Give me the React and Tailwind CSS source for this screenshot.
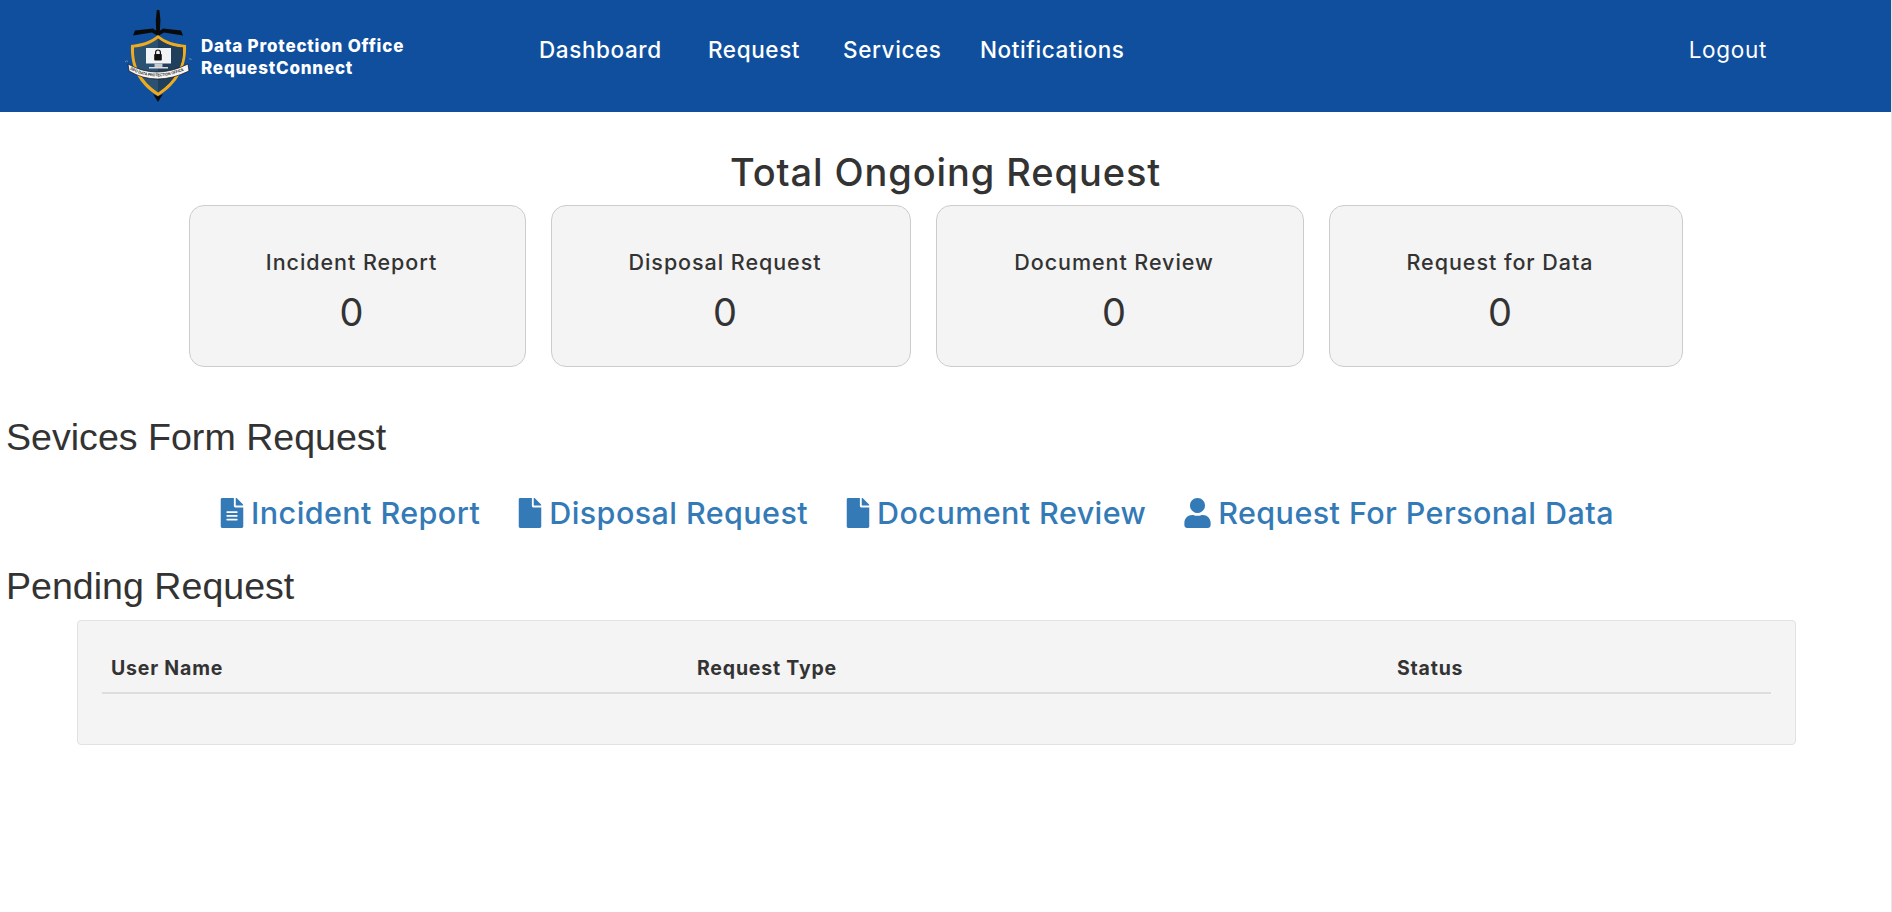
import { FaFileAlt, FaFile, FaUser } from 'react-icons/fa';

const Logo = () => (
  <svg viewBox="0 0 80 104" className="w-[80px] h-[104px] shrink-0">
    {/* sword */}
    <path d="M36.8 6h2.6l1 10 -0.6 13h-3.6l-0.4-13z" fill="#0a0a0a" />
    <path d="M13 31.5 L15 26.5 L33 24.5 L38 28 L43 24.5 L61 26.5 L63 31.5 L44 28.5 L38 32 L32 28.5z" fill="#0a0a0a" />
    {/* shield */}
    <path d="M38 31 C45 37 55 40 66 41 C67 62 58 80 38 92 C18 80 10 62 11 41 C21 40 31 37 38 31z" fill="#efab1d" />
    <path d="M38 34.5 C45 40 54 43 63 43.5 C64 62 55 77 38 88.5 C21 77 13 62 14 43.5 C22 43 31 40 38 34.5z" fill="#2b5273" />
    <path d="M38 34.5 C45 40 54 43 63 43.5 C64 62 55 77 38 88.5z" fill="#1f3f5c" />
    <path d="M33 90 L38 92.5 L43 90 L38 98z" fill="#0a0a0a" />
    {/* monitor + lock */}
    <rect x="26" y="44" width="25" height="15.5" fill="#f1f3f4" />
    <rect x="34.5" y="59.5" width="8" height="3.5" fill="#c4cacf" />
    <rect x="29" y="63" width="19" height="1.5" fill="#d9dde0" />
    <path d="M35.6 50v-1.6a2.4 2.4 0 0 1 4.8 0V50" fill="none" stroke="#111" strokeWidth="1.2" />
    <rect x="34.2" y="50" width="7.6" height="6.5" rx="0.8" fill="#111" />
    {/* banner */}
    <path d="M5 58 q1.5 -2 3 -0.5 M69 55 q2 -1 2.5 1" fill="none" stroke="#6f8aa3" strokeWidth="1" />
    <path d="M8 60 Q36 76 68 60 L69 67 Q36 83 9 67z" fill="#f6f6f6" stroke="#111" strokeWidth="0.7" />
    <path id="logo-banner-text" d="M10 65.5 Q36 79.5 67 65" fill="none" />
    <text fontFamily="Liberation Sans, sans-serif" fontSize="4" fontWeight="700" fill="#222">
      <textPath href="#logo-banner-text" textLength="56" lengthAdjust="spacingAndGlyphs">DPO DATA PROTECTION OFFICE</textPath>
    </text>
  </svg>
);

const stats = [
  { label: 'Incident Report', width: 'w-[337px]' },
  { label: 'Disposal Request', width: 'w-[360px]' },
  { label: 'Document Review', width: 'w-[368px]' },
  { label: 'Request for Data', width: 'w-[354px]' },
];

const links = [
  { label: 'Incident Report', icon: <FaFileAlt className="w-[24px] h-[30px]" /> },
  { label: 'Disposal Request', icon: <FaFile className="w-[24px] h-[30px]" /> },
  { label: 'Document Review', icon: <FaFile className="w-[24px] h-[30px]" /> },
  { label: 'Request For Personal Data', icon: <FaUser className="w-[27px] h-[30px]" /> },
];

export default function App() {
  return (
    <div className="min-h-[912px] bg-white text-[#333] border-r border-[#e5e5e5] font-['Inter','Open_Sans',sans-serif]">
      {/* Navbar */}
      <header className="h-[112px] bg-[#0f4f9e] text-white flex items-center pl-[120px] pr-[124px]">
        <Logo />
        <div className="ml-[1px] w-[338px] text-[17px] leading-[22px] font-extrabold tracking-[0.8px] mt-[2px]">
          <div>Data Protection Office</div>
          <div>RequestConnect</div>
        </div>
        <nav className="grid grid-cols-[169px_135px_137px_auto] text-[22.5px] font-medium tracking-[0.6px] -mt-[12px]">
          <a>Dashboard</a>
          <a>Request</a>
          <a>Services</a>
          <a>Notifications</a>
        </nav>
        <a className="ml-auto text-[22.5px] tracking-[0.7px] -mt-[12px]">Logout</a>
      </header>

      <main>
        <h1 className="text-[38px] leading-[40px] font-medium tracking-[0.9px] text-center mt-[40px] mb-[13px]">Total Ongoing Request</h1>

        <div className="flex justify-center gap-[25px] pr-[20px]">
          {stats.map((s) => (
            <div key={s.label} className={`${s.width} h-[162px] rounded-[15px] bg-[#f4f4f4] border border-[#cccccc] flex flex-col items-center pt-[41px] pr-[11px]`}>
              <div className="text-[21.5px] leading-[30px] font-medium tracking-[0.95px]">{s.label}</div>
              <div className="text-[38px] leading-[46px] mt-[12px]">0</div>
            </div>
          ))}
        </div>

        <h2 className="font-['Liberation_Sans',sans-serif] text-[37.6px] leading-[40px] pl-[6px] mt-[50px]">Sevices Form Request</h2>

        <div className="flex justify-center gap-[38px] mt-[36px] pr-[57px] text-[30.5px] leading-[40px] font-[450] tracking-[0.42px] text-[#337ab7]">
          {links.map((l) => (
            <a key={l.label} className="flex items-center gap-[7px]">
              {l.icon}
              <span>{l.label}</span>
            </a>
          ))}
        </div>

        <h2 className="font-['Liberation_Sans',sans-serif] text-[37.6px] leading-[40px] pl-[6px] mt-[33px]">Pending Request</h2>

        <div className="ml-[77px] w-[1719px] h-[125px] mt-[14px] bg-[#f4f4f4] border border-[#e2e2e2] rounded-[4px] px-[24px] pt-[23px]">
          <div className="grid grid-cols-[586px_700px_1fr] border-b-2 border-[#dddddd] h-[50px] items-center pt-[2px] pl-[9px] text-[19.5px] font-bold tracking-[0.8px]">
            <div>User Name</div>
            <div>Request Type</div>
            <div>Status</div>
          </div>
        </div>
      </main>
    </div>
  );
}
